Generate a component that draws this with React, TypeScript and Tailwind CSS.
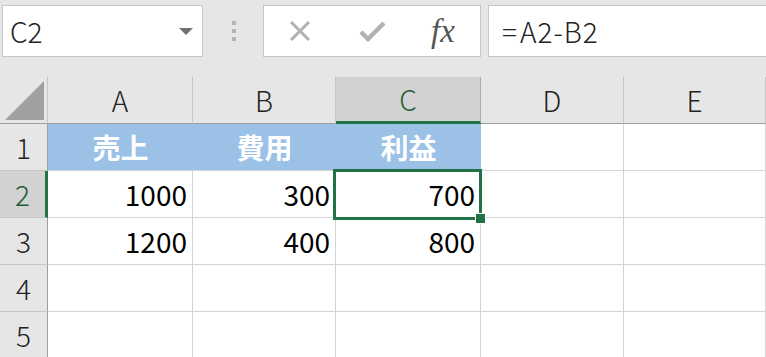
import { ReactNode } from "react";

const cols = ["A", "B", "C", "D", "E"];
const rows: (string | number)[][] = [
  ["売上", "費用", "利益", "", ""],
  [1000, 300, 700, "", ""],
  [1200, 400, 800, "", ""],
  ["", "", "", "", ""],
  ["", "", "", "", ""],
];

const font = "font-['Noto_Sans_CJK_JP','Noto_Sans',sans-serif]";

function Cell({ children, className = "" }: { children?: ReactNode; className?: string }) {
  return <div className={`relative h-[47px] border-r border-b border-[#d4d4d4] ${className}`}>{children}</div>;
}

export default function App() {
  return (
    <div className={`w-[766px] h-[357px] overflow-hidden bg-[#e6e6e6] ${font}`}>
      {/* formula bar */}
      <div className="flex h-[77px] items-start pt-[5px]">
        <div className="ml-[2px] flex h-[52px] w-[201px] items-center border border-[#c6c6c6] bg-white pl-[7px] pr-[9px]">
          <span className="flex-1 text-[28px] font-light leading-none text-[#222]">C2</span>
          <svg width="14" height="7" viewBox="0 0 14 7">
            <path d="M0 0h14L7 7z" fill="#707070" />
          </svg>
        </div>
        <div className="ml-[29px] mt-[16px] flex w-[4px] flex-col gap-[4px]">
          <div className="h-[4px] w-[4px] bg-[#b4b4b4]" />
          <div className="h-[4px] w-[4px] bg-[#b4b4b4]" />
          <div className="h-[4px] w-[4px] bg-[#b4b4b4]" />
        </div>
        <div className="ml-[27px] flex h-[52px] w-[218px] items-center border border-[#c6c6c6] bg-white">
          <svg className="ml-[25px]" width="22" height="20" viewBox="0 0 22 20">
            <path d="M2 1l18 18M20 1L2 19" stroke="#b2b2b2" strokeWidth="3" />
          </svg>
          <svg className="ml-[48px]" width="27" height="22" viewBox="0 0 27 22">
            <path d="M2 12l7 7L25 3" stroke="#b2b2b2" strokeWidth="4.5" fill="none" />
          </svg>
          <span className="ml-[45px] font-['Liberation_Serif',serif] text-[33px] italic leading-none text-[#555]">fx</span>
        </div>
        <div className="ml-[7px] flex h-[52px] flex-1 items-center border-y border-l border-[#c6c6c6] bg-white pl-[13px]">
          <span className="text-[28px] font-light leading-none tracking-[1px] text-[#222]">
            <span className="mr-[2px]">=</span>A2-B2
          </span>
        </div>
      </div>

      {/* sheet */}
      <div className="grid grid-cols-[48px_145px_143px_145px_143px_1fr] bg-white">
        <div className="flex h-[47px] items-end justify-end border-r border-b border-r-[#c6c6c6] border-b-[#9e9e9e] bg-[#e6e6e6] pb-[3px] pr-[3px]">
          <svg width="39" height="39" viewBox="0 0 39 39">
            <path d="M39 0v39H0z" fill="#a0a0a0" />
          </svg>
        </div>
        {cols.map((c) => (
          <div
            key={c}
            className={`flex h-[47px] items-center justify-center border-r text-[28px] font-light ${
              c === "C"
                ? "border-b-[3px] border-r-[#ababab] border-b-[#217346] bg-[#d2d2d2] text-[#1e5d3a]"
                : "border-b border-r-[#c6c6c6] border-b-[#9e9e9e] bg-[#e6e6e6] text-[#222]"
            }`}
          >
            {c}
          </div>
        ))}
        {rows.map((r, i) => (
          <div key={i} className="contents">
            <div
              className={`flex h-[47px] items-center justify-center border-b text-[28px] font-light ${
                i === 1
                  ? "border-r-[3px] border-r-[#217346] border-b-[#c6c6c6] bg-[#d2d2d2] text-[#1e5d3a]"
                  : "border-r border-r-[#9e9e9e] border-b-[#c6c6c6] bg-[#e6e6e6] text-[#222]"
              }`}
            >
              {i + 1}
            </div>
            {r.map((v, j) =>
              i === 0 && j < 3 ? (
                <div
                  key={j}
                  className="flex h-[47px] items-center justify-center border-b border-[#d4d4d4] bg-[#9bc2e6] text-[28px] font-bold text-white"
                >
                  {v}
                </div>
              ) : (
                <Cell key={j} className="flex items-center justify-end pr-[5px] text-[28px] text-black">
                  {v}
                  {i === 1 && j === 2 && (
                    <div className="absolute -left-[3px] -top-[2px] z-10 h-[51px] w-[149px] border-[3px] border-[#217346]">
                      <div className="absolute -bottom-[7px] -right-[7px] h-[11px] w-[11px] border border-white bg-[#217346]" />
                    </div>
                  )}
                </Cell>
              )
            )}
          </div>
        ))}
      </div>
    </div>
  );
}
